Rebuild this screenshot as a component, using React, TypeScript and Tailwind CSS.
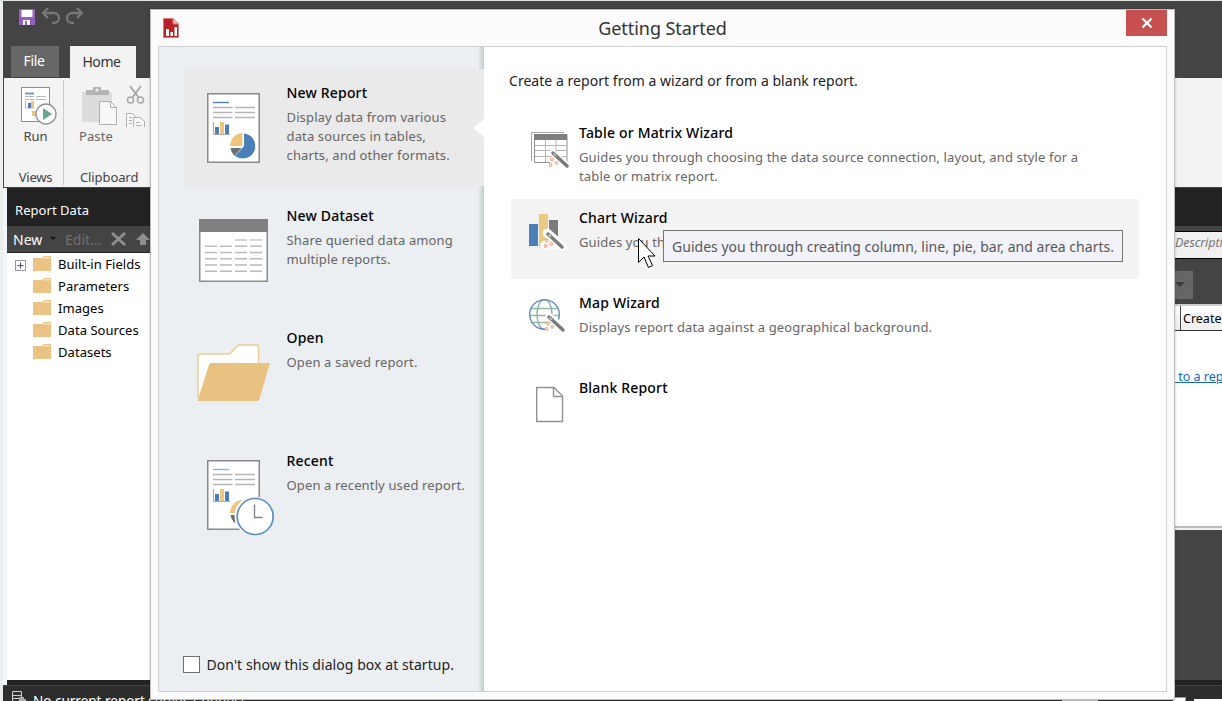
import type { ReactNode } from "react";

const REPORT_LINES = [14, 19, 24];

function ReportSheet({ pie = true }: { pie?: boolean }) {
  return (
    <g>
      <rect x="23.75" y="24.75" width="51.5" height="68.5" fill="#fff" stroke="#8a8a8a" strokeWidth="1.5" />
      <path d="M29 33.5h16" stroke={pie ? "#4a7fb8" : "#8ab0d8"} strokeWidth="1.4" />
      {REPORT_LINES.map((y) => (
        <path key={y} d={`M29 ${y + 24.5}h19.5M51 ${y + 24.5}h20`} stroke="#b5b5b5" strokeWidth="1.3" />
      ))}
      <path d="M29.5 53v12.5h16.5" fill="none" stroke="#ababab" />
      <path d="M31 58h4v7h-4zM41 55.500h4v9.500h-4z" fill="#4a7fb8" />
      <path d="M36 53h4v12h-4z" fill="#ecc67f" />
    </g>
  );
}

function NewReportIcon() {
  return (
    <svg width="103" height="117" className="shrink-0">
      <ReportSheet />
      <path d="M61 77L61 64A13 13 0 1 1 52 87Z" fill="#4a7fb8" stroke="#fff" strokeWidth="1" transform="translate(-1.500 0)" />
      <path d="M58.500 77V64A13 13 0 0 0 46 77Z" fill="#ecc67f" />
      <path d="M57.500 79H46.500A13 13 0 0 0 50.500 87Z" fill="#6e6e6e" />
    </svg>
  );
}

function DatasetIcon() {
  return (
    <svg width="103" height="117" className="shrink-0">
      <rect x="15.75" y="27.75" width="67.500" height="61.500" fill="#fff" stroke="#888c8a" strokeWidth="1.5" />
      <path d="M15 27h69v13H15z" fill="#808080" />
      <path d="M51 48h12M66 48h12" stroke="#c8c8c8" strokeWidth="1.5" />
      {[54.3, 60.5, 66.7, 73, 79.2].map((y) => (
        <path key={y} d={`M21 ${y}h12M36 ${y}h12M51 ${y}h12M66 ${y}h12`} stroke="#bababa" strokeWidth="1.4" />
      ))}
    </svg>
  );
}

function OpenIcon() {
  return (
    <svg width="103" height="117" className="shrink-0">
      <path d="M14 84V42q0-2 2-2H45.500l9-9H72.500q2 0 2 2v20" fill="#fff" stroke="#ebcb93" strokeWidth="1.4" />
      <path d="M13.500 87L24.500 52q1-3 3-3H86L75.500 85q-1 2-2 2Z" fill="#e9c282" />
    </svg>
  );
}

function RecentIcon() {
  return (
    <svg width="103" height="117" className="shrink-0">
      <g transform="translate(0 -1)">
        <ReportSheet pie={false} />
        <path d="M58.500 77V64A13 13 0 0 0 46 77Z" fill="#ecc67f" />
        <path d="M57.500 79H46.500A13 13 0 0 0 50.500 87Z" fill="#6e6e6e" />
      </g>
      <circle cx="71.200" cy="79.500" r="20" fill="#ebeff2" />
      <path d="M60 62A20 20 0 0 0 60 96V62z" fill="#fff" />
      <circle cx="71.200" cy="79.500" r="18" fill="#fff" stroke="#5d8dc2" strokeWidth="1.7" />
      <path d="M70.500 67.500v13h8" fill="none" stroke="#858585" strokeWidth="1.4" />
    </svg>
  );
}

function Wand({ x, y }: { x: number; y: number }) {
  return (
    <g transform={`translate(${x} ${y})`}>
      <path d="M2 2L16 15" stroke="#fff" strokeWidth="7" strokeLinecap="round" />
      <path d="M2 2L16 15" stroke="#7b7b7b" strokeWidth="3.500" strokeLinecap="round" />
      <path d="M2.500 2.500L5 4.800" stroke="#d8d8d8" strokeWidth="1.2" />
      <g fill="#fff" stroke="#efac82" strokeWidth="1.2">
        <circle cx="0.800" cy="8.500" r="1.300" />
        <circle cx="5.400" cy="11.800" r="1.300" />
        <circle cx="-0.400" cy="14" r="1.300" />
      </g>
    </g>
  );
}

function TableIcon() {
  return (
    <svg width="68" height="80" className="shrink-0">
      <path d="M20.500 47V18.500H53" fill="none" stroke="#a5a5a5" />
      <path d="M23.500 20.500h32.500v28H23.500z" fill="#fff" stroke="#8f8f8f" />
      <path d="M23 20h33v6H23z" fill="#7f7f7f" />
      <path d="M34.500 26v22M45 26v22M24 31.500h32M24 36.500h32M24 42.500h32" stroke="#b5b5b5" />
      <path d="M39 49l3-11 4 1 12 10v4H39z" fill="#fff" />
      <Wand x={40} y={37} />
    </svg>
  );
}

function ChartIcon() {
  return (
    <svg width="68" height="80" className="shrink-0">
      <path d="M18 25h9v22h-9z" fill="#4a80b7" />
      <path d="M28 15h9v32h-9z" fill="#ecc880" />
      <path d="M38 21h9v26h-9z" fill="#7b7b7b" />
      <path d="M36 34L52 48M34 46h15" stroke="#fafafa" strokeWidth="9" strokeLinecap="round" />
      <Wand x={35} y={33} />
    </svg>
  );
}

function MapIcon() {
  return (
    <svg width="68" height="80" className="shrink-0">
      <g fill="none" strokeWidth="1.400">
        <path d="M20 24.500h26M19 31.500h29M20 38.500h22" stroke="#93b9a6" />
        <ellipse cx="33.500" cy="30.500" rx="7.500" ry="15" stroke="#8bb2a5" />
        <circle cx="33.500" cy="30.500" r="14.800" stroke="#6894bd" strokeWidth="1.500" />
      </g>
      <path d="M39 33L54 46M38 43h12" stroke="#fff" strokeWidth="7" strokeLinecap="round" />
      <Wand x={36} y={31} />
    </svg>
  );
}

function BlankIcon() {
  return (
    <svg width="68" height="80" className="shrink-0">
      <path d="M25.700 18.500H43l8.500 8.500v25.500H25.700z" fill="#fff" stroke="#929292" strokeWidth="1.400" />
      <path d="M42.500 18.500v9h9" fill="none" stroke="#929292" strokeWidth="1.400" />
    </svg>
  );
}

function ItemText({ title, lines }: { title: string; lines?: ReactNode }) {
  return (
    <>
      <div className="text-[14px] leading-[20px] font-medium tracking-[0.18px] text-black">{title}</div>
      <div className="pt-[5px] text-[13px] leading-[19px] tracking-[0.14px] text-[#666]">{lines}</div>
    </>
  );
}

function LeftItem({ icon, title, lines, selected }: { icon: ReactNode; title: string; lines: ReactNode; selected?: boolean }) {
  return (
    <div className={`relative flex h-[117px] shrink-0 rounded-l ${selected ? "bg-[#eaeaea]" : ""}`}>
      {icon}
      <div className="-ml-[0.5px] pt-[14px] whitespace-nowrap">
        <ItemText title={title} lines={lines} />
      </div>
      {selected && (
        <svg width="11" height="18" className="absolute right-0 top-[50px]">
          <path d="M11 0v18L0 9z" fill="#fff" />
        </svg>
      )}
    </div>
  );
}

function WizardItem({ icon, title, lines, hover }: { icon: ReactNode; title: string; lines?: ReactNode; hover?: boolean }) {
  return (
    <div className={`flex h-[80px] shrink-0 rounded ${hover ? "bg-[#f3f3f3]" : ""}`}>
      {icon}
      <div className="pt-[9px] whitespace-nowrap">
        <ItemText title={title} lines={lines} />
      </div>
    </div>
  );
}

function TreeRow({ label, expandable }: { label: string; expandable?: boolean }) {
  return (
    <div className="flex h-[22px] items-center whitespace-nowrap">
      <svg width="51" height="22" className="shrink-0">
        {expandable && (
          <g>
            <rect x="8.500" y="7.500" width="10" height="10" fill="#fff" stroke="#999" />
            <path d="M10.500 12.500h6M13.500 9.500v6" stroke="#3850a0" />
          </g>
        )}
        <path d="M26 5h9l2-2h7v15H26z" fill="#ebc384" />
        <path d="M37 4h6v1.500h-7z" fill="#f8e6c8" />
      </svg>
      <span className="pt-[2px] text-[13px] tracking-[0.05px] text-black">{label}</span>
    </div>
  );
}

function Ribbon() {
  return (
    <div className="flex h-[109px] shrink-0 bg-[#f3f3f3] text-[13px] text-[#444]">
      <div className="flex w-[59px] shrink-0 flex-col items-center pl-[4px]">
        <svg width="44" height="46" className="mt-[3px] shrink-0">
          <rect x="7.500" y="6.500" width="28" height="34" fill="#fff" stroke="#8e8e8e" />
          <path d="M11 12.500h9" stroke="#6f9ccb" strokeWidth="2" />
          <path d="M11 15.500h9M22 15.500h10M11 18.500h9M22 18.500h10" stroke="#bbb" />
          <path d="M11.500 20v7h9" fill="none" stroke="#bbb" />
          <path d="M14 22h3v5h-3z" fill="#4a7fb8" />
          <path d="M17 20h3v7h-3zM18 30h4v5h-4z" fill="#ecc67f" />
          <circle cx="32" cy="33" r="10" fill="#fff" stroke="#909090" strokeWidth="1.300" />
          <path d="M29 27l9 6-9 6z" fill="#6aa792" />
        </svg>
        <span className="leading-[18px]">Run</span>
        <span className="mt-[23px] leading-[18px] tracking-[-0.2px]">Views</span>
      </div>
      <div className="my-[2px] w-px shrink-0 bg-[#ccc]" />
      <div className="flex w-[88px] shrink-0 flex-col pl-[15px]">
        <svg width="72" height="46" className="mt-[3px] shrink-0">
          <path d="M3 11h30v30H3z" fill="#dcdcdc" />
          <path d="M7 14V9h7V6h8v3h8v5z" fill="#b4b4b4" />
          <circle cx="18" cy="9" r="1.500" fill="#f3f3f3" />
          <path d="M20.500 20.500h11l6 6v17h-17z" fill="#f8f8f8" stroke="#b0b0b0" />
          <path d="M31.500 20.500v6h6" fill="none" stroke="#b0b0b0" />
          <g fill="none" stroke="#aaa" strokeWidth="2">
            <path d="M51 5l9 12M62 5l-9 12" />
            <circle cx="51.500" cy="19" r="3" strokeWidth="1.600" />
            <circle cx="61.500" cy="19" r="3" strokeWidth="1.600" />
          </g>
          <g fill="#f8f8f8" stroke="#b0b0b0">
            <path d="M47.500 32.500h6l3 3v11h-9z" />
            <path d="M54.500 36.500h7l4 4v9h-11zM50 36.500h3M50 39.500h3M50 42.500h3M57 41.500h4M57 44.500h6" />
          </g>
        </svg>
        <span className="leading-[18px] tracking-[0.1px] text-[#666]">Paste</span>
        <span className="mt-[23px] ml-px leading-[18px] tracking-[-0.1px]">Clipboard</span>
      </div>
    </div>
  );
}

function DesignerEdge() {
  return (
    <div className="flex w-[47px] shrink-0 flex-col overflow-hidden whitespace-nowrap text-[13px]">
      <div className="h-[77px] shrink-0 bg-[#444]" />
      <div className="h-[109px] shrink-0 bg-[#f3f3f3]" />
      <div className="h-[39px] shrink-0 border-t border-[#444] bg-[#222]" />
      <div className="h-[5px] shrink-0 bg-[#444]" />
      <div className="h-[28px] shrink-0 border-y border-black bg-[#f0f0f0] text-[12.500px] leading-[22px] tracking-[-0.1px] text-[#777] italic">
        Description
      </div>
      <div className="h-[45px] shrink-0 bg-[#444] pt-[12px]">
        <div className="h-[28px] w-[18px] bg-[#666]">
          <svg width="18" height="28">
            <path d="M0 11h10l-5 5z" fill="#3a3a3a" />
          </svg>
        </div>
      </div>
      <div className="flex h-[27px] shrink-0 border-t-2 border-b border-t-[#ccc] border-b-[#333] bg-linear-to-b from-white to-[#eee]">
        <div className="w-[6px] shrink-0 border-r border-[#444]" />
        <span className="pl-[2px] text-[12.500px] leading-[26px] text-black">Created</span>
      </div>
      <div className="h-[195px] shrink-0 bg-white pt-[36px] text-[12.500px] leading-[20px] text-[#1068c4]">
        <span className="whitespace-pre underline"> to a report</span>
      </div>
      <div className="h-[4px] shrink-0 border-t-2 border-[#bbb] bg-[#eef0f0]" />
      <div className="h-[150px] shrink-0 bg-[#444]" />
      <div className="h-[5px] shrink-0 bg-[#222]" />
    </div>
  );
}

function Dialog() {
  return (
    <div className="absolute top-[8px] left-[150px] flex h-[691px] w-[1025px] flex-col border border-[#bdbdbd] bg-[#fbfbfb] shadow-[0_0_3px_rgba(0,0,0,0.2)]">
      <div className="flex h-[36px] shrink-0">
        <svg width="66" height="36" className="shrink-0">
          <path d="M12.500 8.500h9.500l5.500 5.500v13.500h-15z" fill="#ba1f25" stroke="#d97c80" />
          <path d="M22 8.500v5.500h5.500" fill="#e8b6b8" stroke="#d97c80" />
          <path d="M15 19h3v7h-3zM19.500 22h2.500v4h-2.500zM23.500 17h2.500v9h-2.500z" fill="#fff" />
        </svg>
        <div className="flex-1 pl-[44px] pr-[62px] text-center text-[18px] leading-[36px] text-[#333]">
          <span className="tracking-[-0.05px]">Getting Started</span>
        </div>
        <div className="flex h-[26px] w-[41px] items-center justify-center bg-[#c75050]">
          <svg width="12" height="10">
            <path d="M1.500 0.500l9 9M10.500 0.500l-9 9" stroke="#fff" strokeWidth="2.200" />
          </svg>
        </div>
        <div className="w-[7px]" />
      </div>
      <div className="mx-[7px] flex h-[646px] shrink-0 border border-[#d0d0d0] bg-white">
        <div className="relative flex w-[325px] shrink-0 flex-col bg-[#ebeff2] pt-[22px] pl-[25px]">
          <div className="absolute top-0 right-0 h-full w-[6px] bg-linear-to-r from-transparent to-[#c4c9cc]" />
          <div className="flex flex-col gap-[5.700px]">
            <LeftItem selected icon={<NewReportIcon />} title="New Report" lines={<>Display data from various<br />data sources in tables,<br />charts, and other formats.</>} />
            <LeftItem icon={<DatasetIcon />} title="New Dataset" lines={<>Share queried data among<br />multiple reports.</>} />
            <LeftItem icon={<OpenIcon />} title="Open" lines="Open a saved report." />
            <LeftItem icon={<RecentIcon />} title="Recent" lines="Open a recently used report." />
          </div>
          <div className="mt-auto mb-[17px] flex h-[20px] items-center gap-[6.500px] text-[14px] whitespace-nowrap text-[#222]">
            <span className="-ml-px size-[17px] border border-[#707070] bg-white" />
            <span className="tracking-[0.06px]">Don't show this dialog box at startup.</span>
          </div>
        </div>
        <div className="flex flex-1 flex-col pr-[27px] pl-[27px]">
          <div className="-ml-[2px] h-[67px] shrink-0 pt-[23px] text-[14px] leading-[21px] tracking-[0.04px] whitespace-nowrap text-[#222]">
            Create a report from a wizard or from a blank report.
          </div>
          <div className="flex flex-col gap-[5px]">
            <WizardItem icon={<TableIcon />} title="Table or Matrix Wizard" lines={<>Guides you through choosing the data source connection, layout, and style for a<br />table or matrix report.</>} />
            <WizardItem hover icon={<ChartIcon />} title="Chart Wizard" lines="Guides you th" />
            <WizardItem icon={<MapIcon />} title="Map Wizard" lines="Displays report data against a geographical background." />
            <WizardItem icon={<BlankIcon />} title="Blank Report" />
          </div>
        </div>
      </div>
    </div>
  );
}

export default function App() {
  return (
    <div className="relative flex h-[701px] w-[1222px] overflow-hidden border-t border-[#dfe5e2] bg-[#eceeee] pl-[3px] font-['Noto_Sans',sans-serif]">
      <div className="flex w-[1219px] flex-col">
        <div className="flex h-[684px] shrink-0">
          <div className="flex w-[1172px] shrink-0 flex-col bg-[#444]">
            <div className="flex h-[45px] shrink-0">
              <svg width="90" height="30">
                <path d="M16 8h16v16H16z" fill="#9560bd" />
                <path d="M18.500 9h11v7h-11zM20 19h7v5h-7z" fill="#fff" />
                <path d="M22 20h2v4h-2z" fill="#9560bd" />
                <g fill="none" stroke="#777" strokeWidth="2.300">
                  <path d="M45 7l-5 5 5 5M40 12h11a5 5 0 0 1 0 10h-2" />
                  <path d="M74 7l5 5-5 5M79 12H69a5 5 0 0 0 0 10h2" />
                </g>
              </svg>
            </div>
            <div className="flex h-[32px] shrink-0 gap-[11px] pl-[8px] text-[14px] tracking-[-0.4px]">
              <div className="h-[31px] w-[48px] bg-[#676767] pr-[2px] text-center leading-[30px] text-white">File</div>
              <div className="h-[32px] w-[66px] bg-[#f3f3f3] pr-[3px] text-center leading-[32px] text-[#333]">Home</div>
            </div>
            <div className="pl-px">
              <Ribbon />
            </div>
            <div className="flex h-[498px] shrink-0 flex-col border-t border-[#444] bg-[#f2f6fc] pl-[4px]">
              <div className="h-[38px] shrink-0 bg-[#222] pl-[8px] text-[13px] leading-[44px] tracking-[0.05px] text-white">Report Data</div>
              <div className="flex h-[27px] shrink-0 items-center border-b border-[#222] bg-[#444] pl-[6px] text-[14px]">
                <span className="w-[37px] text-white">New</span>
                <svg width="15" height="20">
                  <path d="M0 8h6l-3 3z" fill="#111" />
                </svg>
                <span className="w-[46px] text-[#6f6f6f]">Edit...</span>
                <svg width="40" height="20">
                  <path d="M1 4l13 12M14 4L1 16" stroke="#8e8e8e" strokeWidth="3" />
                  <path d="M25 11l7-7 7 7h-4v5h-6v-5z" fill="#8e8e8e" />
                </svg>
              </div>
              <div className="h-[427px] shrink-0 bg-white">
                <TreeRow expandable label="Built-in Fields" />
                <TreeRow label="Parameters" />
                <TreeRow label="Images" />
                <TreeRow label="Data Sources" />
                <TreeRow label="Datasets" />
              </div>
              <div className="h-[5px] shrink-0 bg-[#222]" />
            </div>
          </div>
          <DesignerEdge />
        </div>
        <div className="flex h-[16px] shrink-0 overflow-hidden border-t border-[#444] bg-[#2d2d2d]">
          <svg width="30" height="16" className="shrink-0">
            <path d="M9.500 5.500h9v10h-9zM10 9.500h8M10 12.500h8" fill="#333" stroke="#ccc" />
            <path d="M16 11h5v2h2v3h-7z" fill="#aaa" />
          </svg>
          <span className="pt-[5px] text-[13.500px] leading-[20px] whitespace-nowrap text-white">
            No current report server. Connect
          </span>
          <div className="ml-auto flex items-end">
            <div className="mr-[75px] h-[2px] w-[36px] bg-[#ccc]" />
            <div className="mr-[8px] h-[4px] w-[13px] border-t border-r border-[#999] bg-white" />
            <div className="h-[2px] w-[28px] bg-white" />
          </div>
        </div>
      </div>
      <Dialog />
      <div className="absolute top-[229px] left-[663px] flex h-[32px] w-[460px] items-center border border-[#767676] bg-[#f2f2f9] pl-[8px] text-[14px] tracking-[0.02px] whitespace-nowrap text-[#575757]">
        Guides you through creating column, line, pie, bar, and area charts.
      </div>
      <svg width="20" height="32" className="absolute top-[237px] left-[638px]">
        <path d="M0.500 0.500v24l5.500-5.500 4.500 10.500 4-2-4.500-9.500h7z" fill="#fff" stroke="#000" />
      </svg>
    </div>
  );
}
